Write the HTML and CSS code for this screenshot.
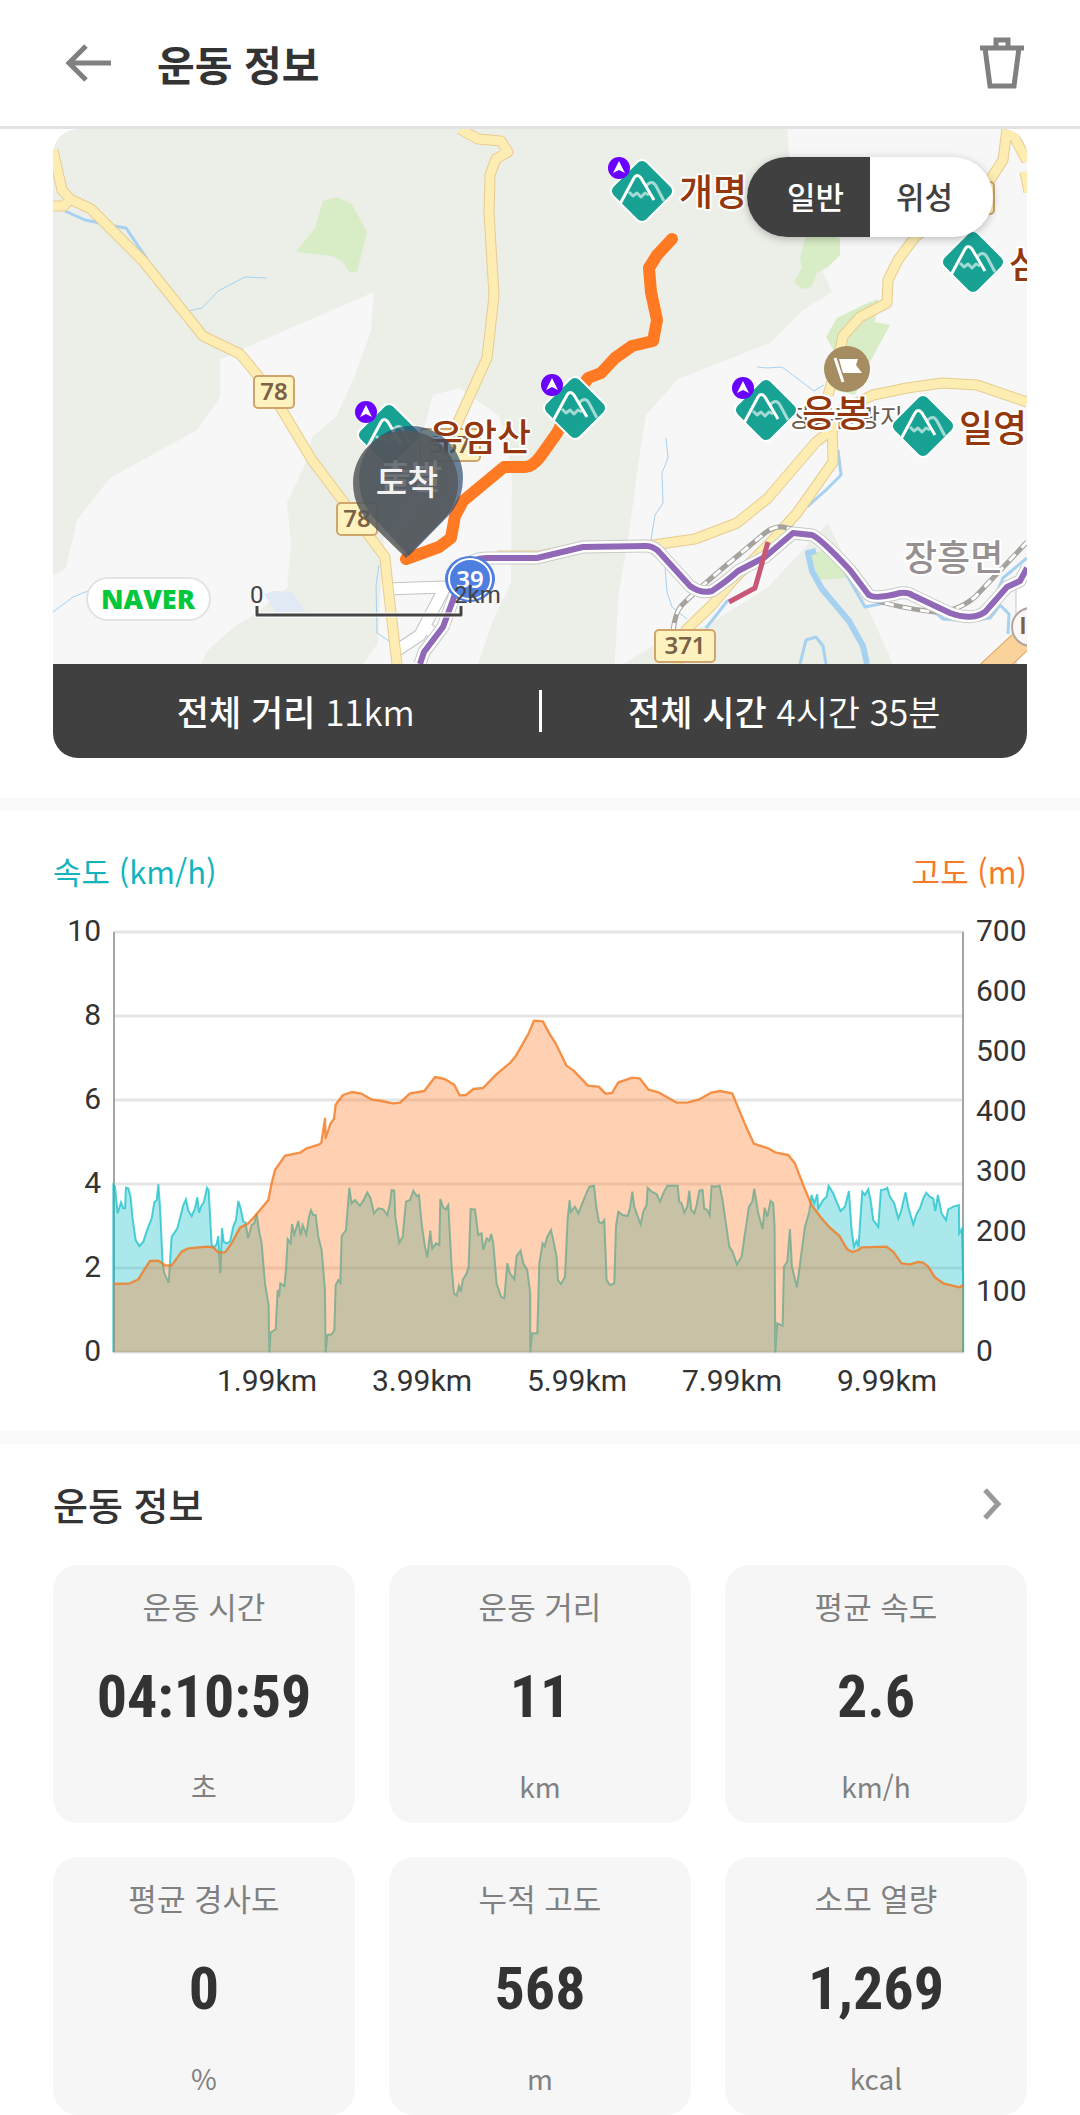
FILE: index.html
```html
<!DOCTYPE html>
<html lang="ko">
<head>
    <meta charset="UTF-8">
    <meta name="viewport" content="width=device-width, initial-scale=1.0">
    <title>운동 정보</title>
    <link rel="stylesheet" href="styles.css">
</head>
<body>
    <header class="topbar">
        <button type="button" class="icon-btn" aria-label="뒤로">
            <svg width="48" height="40" viewBox="0 0 48 40"><path d="M46 20H4M21 3L4 20l17 17"/></svg>
        </button>
        <h1>운동 정보</h1>
        <button type="button" class="icon-btn trash" aria-label="삭제">
            <svg width="46" height="52" viewBox="0 0 46 52"><path d="M1 11h44M17 11V3h12v8M6 11l5 38h24l5-38"/></svg>
        </button>
    </header>

    <main>
        <section class="route">
            <div class="map">
                <svg viewBox="53 129 974 535">
                    <defs>
                        <g id="peak">
                            <rect class="peak-bg" x="-24" y="-24" width="48" height="48" rx="7" transform="rotate(45)"/>
                            <path class="peak-back" d="M-13 1l4 4 4-3 4 4 4-4 4 2M4 -5q6-7 10 0l8 15"/>
                            <path class="peak-front" d="M-22 13l14-26q3-5 7 0l13 22"/>
                        </g>
                        <g id="nav">
                            <circle r="11"/>
                            <path d="M0-7l6 12-6-3-6 3z"/>
                        </g>
                    </defs>

                    <!-- terrain -->
                    <rect class="forest" x="53" y="129" width="974" height="535"/>
                    <path class="plain" d="M374 292l-3 39-16 44-19 42-24 20-5 23-20 43 4 40-4 45-35 28-17 10-28 25-6 13H53v-88l13-8 11-48 33-42 87-48 23-33v-37l25-12z"/>
                    <path class="plain" d="M433 395l27-7 40 29 12 53-1 113-18 37-15 44H363l15-21 2-43 4-60 26-60z"/>
                    <path class="plain" d="M787 129l3 31 10 70 23 42 9 20-29 18-33 33-92 36-32 36-5 30-13 95-10 57-3 67h8l40-24 44-15 60-37 61-65 32 67 33 74h134V129z"/>
                    <path class="grass" d="M296 252l19-24 8-27 14-4 15 7 15 28-10 40h-8l-6-10-11-6z"/>
                    <path class="grass" d="M807 230l33 8v17l-12 12-11 6-6 14-9 2-8-7 8-14-2-10z"/>
                    <path class="grass" d="M878 299l-3 23 15 3-20 37-15 33-20-5 3-32-12-21 11-19 26-13z"/>
                    <path class="grass" d="M811 553l19-3 17 28-29 2z"/>
                    <path class="lake" d="M264 594l10-3 18 1 14 20h-30z"/>

                    <!-- water -->
                    <path class="water w3" d="M65 211l20 9 15 3M114 226l12 2 21 31"/>
                    <path class="water" d="M188 311l14-3 16-17 27-14 22 1M53 612l20-15 20-8M379 565l-3 20 1 48 12 8M757 367l10 1 15-1 20 15 12 9 10-6M666 438l2 20-6 15 1 30-8 12-4 25M665 567l2 25 5 15 15 12"/>
                    <path class="water w3" d="M840 340l-5 15M838 450l3 25-15 15-19 17M728 600l-10 13-12 15M800 664l6-24 10-3 7 9 3 18"/>
                    <path class="water w3" d="M845 572l20 35 20-4M935 612l8 7 27 2 20-3 10-13 9 9-1 20M1027 558l-24 20-6 14"/>
                    <path class="water w5" d="M816 551l-8 2 4 18 10 18 27 32 14 25 4 18"/>

                    <!-- small streets -->
                    <g class="street">
                        <path d="M385 589l60-2-25 48-24 16M425 627l8 6M1022 580v84"/>
                        <path d="M385 589l60-2-25 48-24 16M425 627l8 6M1022 580v84"/>
                    </g>

                    <!-- roads -->
                    <g class="road">
                        <path id="roads" d="M53 150l9 40 8 9 21 10 52 52 60 75 37 18 30 36 42 70 73 97 3 30 9 77M53 206h11l6-7M460 129l18 10 23 2 7 11-12 7-6 16-1 38 5 83-7 62-29 64-22 54-2 28-36 44M1007 129l-4 31-13 20-75 57-17 23-10 20-1 23-27 14-17 19-5 24-10 35M832 420l1 42-36 51-27 30-37 37-21 25-26 25-10 34M832 430l-16 12-48 56-31 25-42 16-42 6-70 2-43 9-43 0M832 415l41-20 34-7 35-5 35 2 50 17M1010 129l17 32M1025 172l4 20"/>
                        <use href="#roads"/>
                    </g>
                    <path class="highway-case" d="M985 675l45-42"/>
                    <path class="highway" d="M985 675l45-42"/>

                    <!-- rail lines -->
                    <g class="rail">
                        <path id="rail" d="M673 632q2-20 9-27 18-18 53-47l30-25q9-7 18-6l17 4M868 598q30 10 67 14 22 0 40-15l52-55"/>
                        <use href="#rail"/>
                    </g>
                    <path class="metro-edge" d="M420 664l4-12 19-25 10-27 10-30q7-12 25-12h49l46-11 63-1q8 0 14 7l30 33q11 8 22 5 15-10 26-20l27-14 28-24 19 2q8 3 38 35l18 24q5 6 32-1 8-1 12 2l38 18q22 8 35-1l22-25 13-6 7-13"/>
                    <path class="metro-case" d="M420 664l4-12 19-25 10-27 10-30q7-12 25-12h49l46-11 63-1q8 0 14 7l30 33q11 8 22 5 15-10 26-20l27-14 28-24 19 2q8 3 38 35l18 24q5 6 32-1 8-1 12 2l38 18q22 8 35-1l22-25 13-6 7-13"/>
                    <path class="metro" d="M420 664l4-12 19-25 10-27 10-30q7-12 25-12h49l46-11 63-1q8 0 14 7l30 33q11 8 22 5 15-10 26-20l27-14 28-24 19 2q8 3 38 35l18 24q5 6 32-1 8-1 12 2l38 18q22 8 35-1l22-25 13-6 7-13"/>
                    <path class="closed" d="M768 542l-13 46-26 14"/>

                    <!-- road numbers -->
                    <g class="badge">
                        <rect x="254" y="376" width="40" height="32" rx="4"/>
                        <text x="274" y="400">78</text>
                        <rect x="337" y="503" width="40" height="32" rx="4"/>
                        <text x="357" y="527">78</text>
                        <rect x="655" y="630" width="60" height="32" rx="4"/>
                        <text x="685" y="654">371</text>
                        <rect x="420" y="429" width="60" height="32" rx="4"/>
                        <text x="450" y="453">367</text>
                        <rect x="934" y="182" width="60" height="32" rx="4"/>
                    </g>
                    <g class="shield">
                        <ellipse class="shield-out" cx="470" cy="579" rx="25" ry="23"/>
                        <ellipse class="shield-in" cx="470" cy="579" rx="21" ry="20"/>
                        <text x="470" y="588">39</text>
                    </g>
                    <circle class="ic" cx="1031" cy="627" r="19"/>
                    <text class="ic-text" x="1023" y="634">I</text>

                    <!-- recorded track -->
                    <path class="track" d="M672 239l-15 16-8 13 2 24 6 28-4 21-21 5-17 12-14 15-13 5-13 20-18 35-17 24q-8 10-15 10h-21l-41 34-8 15-4 22-12 9-33 12"/>

                    <!-- places -->
                    <circle class="flag" cx="847" cy="369" r="23"/>
                    <path class="flag-line" d="M835 358l8 24"/>
                    <path class="flag-cloth" d="M839 359l19 0-2 6 6 8-19 0z"/>
                    <text class="spot" x="788" y="427">장흥관광지</text>
                    <text class="town" x="904" y="571">장흥면</text>
                    <use href="#peak" x="642" y="191"/>
                    <use href="#peak" x="973" y="262"/>
                    <use href="#peak" x="575" y="408"/>
                    <use href="#peak" x="766" y="410"/>
                    <use href="#peak" x="923" y="426"/>
                    <use href="#peak" x="389" y="435"/>
                    <g class="nav">
                        <use href="#nav" x="619" y="168"/>
                        <use href="#nav" x="552" y="385"/>
                        <use href="#nav" x="743" y="388"/>
                        <use href="#nav" x="366" y="412"/>
                    </g>
                    <g class="peak-name">
                        <text x="679" y="206">개명산</text>
                        <text x="1009" y="278">삼</text>
                        <text x="802" y="427">응봉</text>
                        <text x="959" y="442">일영</text>
                        <text x="429" y="451">우암산</text>
                    </g>

                    <!-- start / finish pins -->
                    <path class="pin-start" d="M409 556l-35-38q-15-16-15-40a52 52 0 0 1 104 0q0 22-14 37z"/>
                    <path class="pin-end" d="M406 558l-38-37q-15-16-15-38a52 52 0 0 1 105 0q0 22-15 37z"/>
                    <text class="pin-text faint" x="411" y="489">출발</text>
                    <text class="pin-text" x="407" y="495">도착</text>

                    <!-- scale -->
                    <rect class="naver-pill" x="87" y="578" width="123" height="42" rx="21"/>
                    <text class="naver" x="148" y="609">NAVER</text>
                    <path class="scale-halo" d="M257 606v9h204v-9"/>
                    <path class="scale-line" d="M257 606v9h204v-9"/>
                    <text class="scale-text" x="250" y="603">0</text>
                    <text class="scale-text" x="454" y="603">2km</text>
                </svg>
                <div class="map-type">
                    <button type="button" class="active">일반</button>
                    <button type="button">위성</button>
                </div>
            </div>
            <div class="totals">
                <p><strong>전체 거리</strong> 11km</p>
                <p><strong>전체 시간</strong> 4시간 35분</p>
            </div>
        </section>

        <section class="chart">
            <div class="legend">
                <span class="speed">속도 (km/h)</span>
                <span class="altitude">고도 (m)</span>
            </div>
            <svg viewBox="53 905 974 500">
                <path class="grid" d="M113 932h851M113 1016h851M113 1100h851M113 1184h851M113 1268h851M113 1352h851"/>
                <path class="axis" d="M114 932v420M963 932v420"/>
                <!-- data is plotted at 3 units per pixel -->
                <g transform="translate(100 1140) scale(.3333)">
                    <path class="speed-area" d="M40 637V135L45 140 53 220 63 187 70 205 75 205 78 143 85 145 92 172 97 230 107 300 118 318 130 305 143 265 155 235 163 187 170 180 175 133 180 200 188 370 193 400 206 428 215 290 222 280 232 265 240 235 250 195 258 178 265 212 275 228 285 205 292 172 297 218 303 200 312 185 321 143 326 150 335 315 343 322 350 312 355 288 361 400 366 264 371 305 380 310 390 305 400 260 408 240 415 183 422 205 430 245 437 248 444 295 455 255 463 250 470 220 476 265 485 310 495 430 506 495 508 637 512 578 527 568 533 450 537 470 541 430 553 438 558 388 563 297 572 310 576 252 583 283 595 243 602 285 608 255 619 283 627 230 633 210 640 225 647 225 655 290 665 330 675 450 677 637 682 585 695 583 703 570 707 435 715 420 721 428 725 288 738 270 748 143 755 190 765 180 780 197 790 182 802 157 812 175 822 220 835 205 850 208 862 225 870 190 875 150 883 152 886 230 898 308 908 290 918 185 930 180 940 152 950 168 957 165 965 250 975 320 982 352 991 272 997 325 1008 310 1018 315 1021 177 1030 203 1038 208 1045 195 1055 380 1062 460 1070 467 1077 437 1083 455 1088 420 1100 400 1106 380 1112 207 1125 208 1135 285 1145 280 1150 330 1160 295 1168 302 1174 282 1180 310 1190 430 1203 470 1213 475 1222 370 1230 400 1243 418 1250 348 1262 332 1270 370 1282 390 1291 460 1291 637 1296 580 1312 580 1318 370 1328 310 1334 318 1342 290 1353 270 1360 300 1370 350 1374 420 1383 432 1395 410 1403 238 1409 180 1413 215 1425 200 1435 220 1445 195 1455 170 1468 140 1482 137 1490 205 1497 245 1505 250 1513 240 1520 420 1530 435 1543 430 1548 260 1555 215 1568 225 1583 228 1590 205 1597 155 1603 200 1622 253 1630 215 1640 195 1643 143 1655 155 1670 162 1680 185 1690 160 1702 137 1733 137 1738 185 1745 190 1753 217 1762 200 1768 152 1774 210 1783 220 1790 195 1798 152 1808 150 1813 205 1822 210 1829 225 1835 138 1845 140 1859 137 1868 180 1878 250 1888 320 1898 335 1911 373 1925 350 1935 280 1947 200 1957 185 1963 146 1975 220 1988 267 1994 203 2002 230 2012 183 2020 190 2024 260 2026 637 2032 550 2048 557 2052 380 2062 365 2070 267 2076 380 2091 442 2103 350 2115 260 2128 215 2135 165 2143 190 2152 163 2155 205 2170 180 2180 170 2186 138 2200 160 2212 190 2222 213 2235 200 2247 153 2255 270 2262 320 2270 303 2276 320 2280 255 2287 155 2295 165 2305 148 2312 180 2320 240 2335 260 2343 150 2355 148 2362 143 2370 170 2383 190 2395 235 2403 215 2410 185 2417 157 2425 200 2440 253 2450 222 2460 205 2470 175 2479 158 2490 170 2500 175 2506 213 2514 165 2525 220 2538 240 2545 208 2560 200 2577 195 2578 280 2586 267 2590 430V637"/>
                    <path class="altitude-fill" d="M40 637V432L90 430 115 418 135 385 150 363 175 362 195 376 215 376 245 335 265 325 320 320 340 322 355 337 375 337 395 310 420 263 445 250 470 222 505 180 515 130 525 90 555 47 600 38 620 25 658 13 664 8 675-64 677-6 691-48 702-64 707-106 729-135 755-144 782-140 814-122 846-117 879-110 900-112 930-140 973-147 1005-189 1034-183 1063-166 1079-134 1098-135 1120-153 1149-156 1189-197 1232-233 1248-253 1286-320 1302-358 1329-356 1348-320 1367-290 1399-224 1421-208 1464-163 1496-160 1517-139 1536-141 1555-173 1597-187 1619-185 1646-151 1678-142 1731-112 1764-113 1796-121 1833-142 1860-147 1897-140 1935-48 1962 11 2005 25 2026 37 2065 45 2085 70 2110 135 2135 195 2165 235 2190 263 2218 287 2242 328 2258 336 2275 330 2285 322 2360 320 2380 335 2405 370 2430 373 2455 366 2470 368 2485 380 2505 412 2530 430 2580 442 2590 435V637z"/>
                    <path class="altitude-line" d="M40 432L90 430 115 418 135 385 150 363 175 362 195 376 215 376 245 335 265 325 320 320 340 322 355 337 375 337 395 310 420 263 445 250 470 222 505 180 515 130 525 90 555 47 600 38 620 25 658 13 664 8 675-64 677-6 691-48 702-64 707-106 729-135 755-144 782-140 814-122 846-117 879-110 900-112 930-140 973-147 1005-189 1034-183 1063-166 1079-134 1098-135 1120-153 1149-156 1189-197 1232-233 1248-253 1286-320 1302-358 1329-356 1348-320 1367-290 1399-224 1421-208 1464-163 1496-160 1517-139 1536-141 1555-173 1597-187 1619-185 1646-151 1678-142 1731-112 1764-113 1796-121 1833-142 1860-147 1897-140 1935-48 1962 11 2005 25 2026 37 2065 45 2085 70 2110 135 2135 195 2165 235 2190 263 2218 287 2242 328 2258 336 2275 330 2285 322 2360 320 2380 335 2405 370 2430 373 2455 366 2470 368 2485 380 2505 412 2530 430 2580 442 2590 435"/>
                </g>
                <g class="tick left">
                    <text x="101" y="941">10</text>
                    <text x="101" y="1025">8</text>
                    <text x="101" y="1109">6</text>
                    <text x="101" y="1193">4</text>
                    <text x="101" y="1277">2</text>
                    <text x="101" y="1361">0</text>
                </g>
                <g class="tick">
                    <text x="976" y="941">700</text>
                    <text x="976" y="1001">600</text>
                    <text x="976" y="1061">500</text>
                    <text x="976" y="1121">400</text>
                    <text x="976" y="1181">300</text>
                    <text x="976" y="1241">200</text>
                    <text x="976" y="1301">100</text>
                    <text x="976" y="1361">0</text>
                </g>
                <g class="tick bottom">
                    <text x="267" y="1391">1.99km</text>
                    <text x="422" y="1391">3.99km</text>
                    <text x="577" y="1391">5.99km</text>
                    <text x="732" y="1391">7.99km</text>
                    <text x="887" y="1391">9.99km</text>
                </g>
            </svg>
        </section>

        <section class="info">
            <div class="info-head">
                <h2>운동 정보</h2>
                <button type="button" class="icon-btn more" aria-label="더보기">
                    <svg width="22" height="34" viewBox="0 0 22 34"><path d="M4 3l13 14L4 31"/></svg>
                </button>
            </div>
            <div class="cards">
                <div class="card"><h3>운동 시간</h3><b>04:10:59</b><span>초</span></div>
                <div class="card"><h3>운동 거리</h3><b>11</b><span>km</span></div>
                <div class="card"><h3>평균 속도</h3><b>2.6</b><span>km/h</span></div>
                <div class="card"><h3>평균 경사도</h3><b>0</b><span>%</span></div>
                <div class="card"><h3>누적 고도</h3><b>568</b><span>m</span></div>
                <div class="card"><h3>소모 열량</h3><b>1,269</b><span>kcal</span></div>
            </div>
        </section>
    </main>
</body>
</html>
```
FILE: styles.css
```css
:root {
    --dark: #333333;
    --bar: #404040;
    --grey: #808080;
    --teal: #18c0c9;
    --orange: #ff7a22;
    --main-font: "Noto Sans CJK KR", sans-serif;
    --number-font: "Roboto Condensed", "Roboto", sans-serif;
}

* {
    box-sizing: border-box;
}

body {
    margin: 0;
    background-color: white;
    color: var(--dark);
    font-family: var(--main-font);
}

h1, h2, h3, p {
    margin: 0;
}

button {
    font-family: inherit;
    border: none;
    padding: 0;
    background: none;
    cursor: pointer;
}

svg {
    display: block;
}

.topbar {
    display: flex;
    align-items: center;
    height: 129px;
    padding: 0 55px 0 65px;
    border-bottom: 3px solid #e3e3e3;
}
.topbar h1 {
    margin-left: 44px;
    font-size: 41px;
    line-height: 60px;
    font-weight: 700;
}
.icon-btn svg {
    fill: none;
    stroke: var(--grey);
    stroke-width: 5;
}
.icon-btn.trash {
    margin-left: auto;
}

/* map */
.route {
    padding: 0 53px 40px;
}
.map {
    position: relative;
    overflow: hidden;
    border-radius: 25px 25px 0 0;
}
.map > svg {
    width: 100%;
}
.map path {
    fill: none;
    stroke-linejoin: round;
}
.forest { fill: #ecefe8; }
.map .plain { fill: #f7f7f7; }
.map .grass { fill: #d8ecc6; }
.map .lake { fill: #e0e9f4; }
.water { stroke: #a6d1f0; stroke-width: 1; }
.water.w3 { stroke-width: 3; }
.water.w5 { stroke-width: 6; }
.street path { stroke: #c4c4c4; stroke-width: 13; }
.street path + path { stroke: white; stroke-width: 11; }
.road { stroke: #e6cc92; stroke-width: 11; }
.road use { stroke: #fdedb2; stroke-width: 9; }
.road path { stroke: inherit; stroke-width: inherit; }
.highway-case { stroke: #dca062; stroke-width: 23; }
.highway { stroke: #f9d39a; stroke-width: 21; }
.rail { stroke: #a6a39e; stroke-width: 5; }
.rail use { stroke: white; stroke-width: 3; stroke-dasharray: 9 9; }
.rail path { stroke: inherit; stroke-width: inherit; }
.metro-edge { stroke: #c9c9c9; stroke-width: 13; }
.metro-case { stroke: white; stroke-width: 11; }
.metro { stroke: #9068b7; stroke-width: 6; }
.closed { stroke: #c85676; stroke-width: 5; }
.track {
    stroke: var(--orange);
    stroke-width: 12;
    stroke-linecap: round;
}

.badge rect {
    fill: #fef3bf;
    stroke: #d0a56b;
    stroke-width: 2;
}
.badge text, .shield text, .ic-text {
    font-family: "Noto Sans", sans-serif;
    font-size: 24px;
    font-weight: 600;
    fill: #7b6246;
    text-anchor: middle;
}
.ic-text { font-family: "Roboto", sans-serif; }
.shield-out { fill: #4f7ee1; }
.shield-in { fill: #4f7ee1; stroke: white; stroke-width: 2; }
.shield text { fill: white; }
.ic { fill: #fbf7f6; stroke: #b3a6a2; stroke-width: 2; }

.flag { fill: #a68d61; }
.flag-line { stroke: white; stroke-width: 3; }
.map .flag-cloth { fill: white; }
.spot, .town, .peak-name {
    paint-order: stroke;
    stroke: white;
    stroke-width: 4;
    stroke-linejoin: round;
}
.spot { font-size: 25px; fill: #6c5c50; }
.town { font-size: 36px; font-weight: 500; fill: #979090; }
.peak-name { font-size: 37px; font-weight: 500; fill: #94370c; }
.peak-bg { fill: #18a294; stroke: white; stroke-width: 2; }
.peak-back { stroke: #a3dad4; stroke-width: 3; }
.peak-front { stroke: white; stroke-width: 3; }
#nav circle { fill: #6a00ff; }
.map #nav path { fill: white; }

.map .pin-start { fill: #2f4f70; opacity: 0.7; }
.map .pin-end { fill: #55585b; opacity: 0.85; }
.pin-text {
    font-size: 34px;
    font-weight: 500;
    fill: #f2f2f2;
    text-anchor: middle;
}
.pin-text.faint { opacity: 0.15; }

.naver-pill { fill: white; stroke: #e3e3e3; stroke-width: 2; }
.naver {
    font-family: "Open Sans", sans-serif;
    font-size: 27px;
    font-weight: 800;
    fill: #03c73c;
    text-anchor: middle;
}
.scale-halo { stroke: white; stroke-width: 6; opacity: 0.6; }
.scale-line { stroke: #454545; stroke-width: 3; }
.scale-text { font-family: "Roboto", sans-serif; font-size: 24px; fill: #444444; }

.map-type {
    position: absolute;
    top: 28px;
    right: 34px;
    display: flex;
    border-radius: 40px;
    overflow: hidden;
    background-color: white;
    box-shadow: 0 2px 8px rgba(0, 0, 0, 0.25);
}
.map-type button {
    width: 123px;
    height: 80px;
    padding: 0 14px 4px 0;
    font-size: 31px;
    font-weight: 500;
    color: var(--bar);
}
.map-type .active {
    padding: 0 0 4px 14px;
    background-color: var(--bar);
    color: white;
}

.totals {
    display: flex;
    align-items: center;
    height: 94px;
    border-radius: 0 0 25px 25px;
    background-color: var(--bar);
    color: white;
}
.totals p {
    flex: 1;
    text-align: center;
    font-size: 35px;
    line-height: 42px;
    font-weight: 350;
}
.totals p + p {
    border-left: 3px solid white;
}
.totals strong {
    font-weight: 500;
}

/* chart */
.chart {
    padding: 34px 53px 26px;
    border-top: 13px solid #fafafa;
}
.legend {
    display: flex;
    justify-content: space-between;
    font-size: 31px;
    line-height: 52px;
    font-weight: 400;
}
.legend .speed { color: #14b3bb; }
.legend .altitude { color: #f47b2c; }
.chart svg {
    width: 100%;
    margin-top: 8px;
    overflow: visible;
}
.grid { stroke: #e5e5e5; stroke-width: 3; }
.axis { stroke: #a5a5a5; stroke-width: 2; }
.speed-area {
    fill: var(--teal);
    fill-opacity: 0.37;
    stroke: var(--teal);
    stroke-opacity: 0.75;
    stroke-width: 6;
}
.altitude-fill { fill: var(--orange); fill-opacity: 0.35; }
.altitude-line {
    fill: none;
    stroke: #f47920;
    stroke-opacity: 0.8;
    stroke-width: 7;
    stroke-linejoin: round;
}
.tick {
    font-family: "Roboto", sans-serif;
    font-size: 30px;
    fill: var(--dark);
}
.tick.left { text-anchor: end; }
.tick.bottom { text-anchor: middle; }

/* workout info */
.info {
    padding: 32px 53px 0;
    border-top: 13px solid #fafafa;
}
.info-head {
    display: flex;
    justify-content: space-between;
    align-items: center;
    padding-right: 24px;
}
.info-head h2 {
    font-size: 38px;
    line-height: 56px;
    font-weight: 500;
}
.more svg {
    stroke: #999999;
}
.cards {
    display: grid;
    grid-template-columns: repeat(3, 1fr);
    gap: 34px;
    margin-top: 33px;
}
.card {
    display: flex;
    flex-direction: column;
    align-items: center;
    height: 258px;
    padding-top: 18px;
    border-radius: 25px;
    background-color: #f6f6f6;
    color: var(--grey);
}
.card h3 {
    font-size: 31px;
    line-height: 46px;
    font-weight: 400;
}
.card b {
    margin: 24px 0 22px;
    font-family: var(--number-font);
    font-size: 60px;
    line-height: 88px;
    color: var(--dark);
}
.card span {
    font-size: 28px;
    line-height: 46px;
}
```
